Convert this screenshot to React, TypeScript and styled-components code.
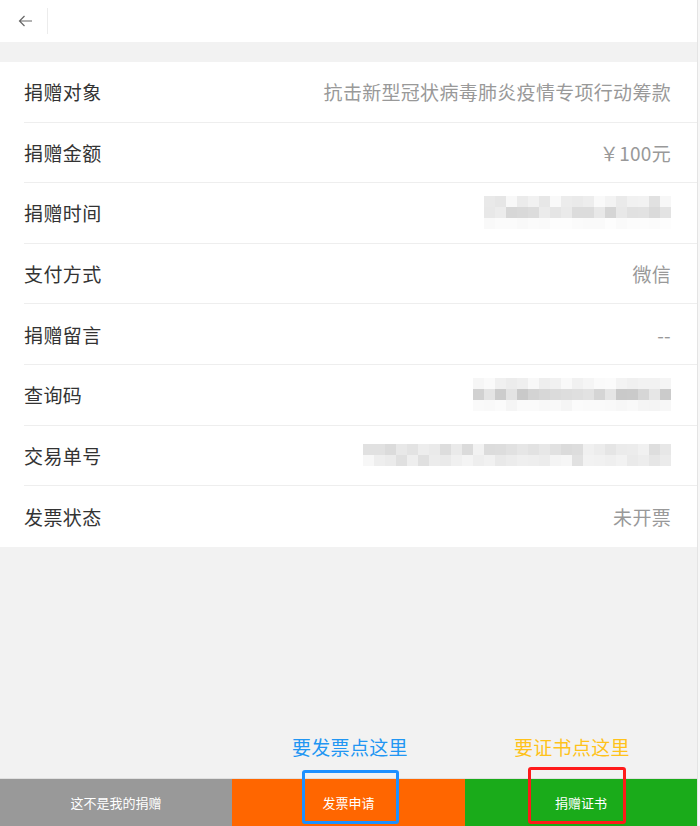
import React from "react";
import styled, { createGlobalStyle } from "styled-components";

const Global = createGlobalStyle`
  html, body { margin: 0; padding: 0; background: #f2f2f2; }
  body { font-family: "Noto Sans CJK SC", "Noto Sans", sans-serif; }
  * { box-sizing: border-box; }
`;

const Frame = styled.div`
  display: flex;
  width: 700px;
  height: 826px;
  overflow: hidden;
`;

const Page = styled.div`
  position: relative;
  width: 697px;
  height: 826px;
  display: flex;
  flex-direction: column;
  background: #f2f2f2;
`;

const Gutter = styled.div`
  width: 3px;
  background: #f7f7f7;
  border-left: 1px solid #e4e4e4;
`;

const Header = styled.div`
  height: 42px;
  background: #fff;
  display: flex;
  align-items: center;
  padding-left: 17px;
`;

const BackButton = styled.div`
  width: 17px;
  height: 17px;
  display: flex;
  align-items: center;
  justify-content: center;
  color: #666;
`;

const HeaderDivider = styled.div`
  width: 1px;
  height: 26px;
  background: #ececec;
  margin-left: 13px;
`;

const Spacer = styled.div`
  height: 20px;
`;

const List = styled.div`
  background: #fff;
  display: flex;
  flex-direction: column;
  padding-left: 24px;
`;

const Row = styled.div<{ $last?: boolean }>`
  height: 60.6px;
  display: flex;
  align-items: center;
  justify-content: space-between;
  padding-right: 26px;
  border-bottom: ${(p) => (p.$last ? "none" : "1px solid #eeeeee")};
`;

const Label = styled.span`
  font-size: 19px;
  color: #333;
  letter-spacing: 0.4px;
`;

const Value = styled.span`
  font-size: 19px;
  color: #999;
  letter-spacing: 0.3px;
`;

const MosaicBox = styled.div`
  display: flex;
  flex-direction: column;
`;

const MosaicRow = styled.div`
  display: flex;
`;

const Cell = styled.div`
  width: 11px;
  height: 11px;
`;

const Fill = styled.div`
  flex: 1;
`;

const BottomBar = styled.div`
  height: 48px;
  display: grid;
  grid-template-columns: 232px 233px 232px;
  border-top: 1px solid #e0e0e0;
`;

const BarButton = styled.div<{ $bg: string }>`
  background: ${(p) => p.$bg};
  color: #fff;
  font-size: 13px;
  display: flex;
  align-items: center;
  justify-content: center;
`;

const Note = styled.div<{ $color: string; $left: number }>`
  position: absolute;
  top: 733px;
  left: ${(p) => p.$left}px;
  font-size: 19px;
  color: ${(p) => p.$color};
  letter-spacing: 0.3px;
`;

const Marker = styled.div<{ $color: string; $left: number; $top: number; $w: number }>`
  position: absolute;
  left: ${(p) => p.$left}px;
  top: ${(p) => p.$top}px;
  width: ${(p) => p.$w}px;
  height: ${(p) => 824 - p.$top}px;
  border: 3px solid ${(p) => p.$color};
  border-radius: 3px;
`;

function rand(seed: number) {
  let s = seed;
  return () => {
    s = (s * 9301 + 49297) % 233280;
    return s / 233280;
  };
}

const Mosaic: React.FC<{ width: number; rows: [number, number, number][]; seed: number }> = ({
  width,
  rows,
  seed,
}) => {
  const r = rand(seed);
  const cols = Math.round(width / 11);
  return (
    <MosaicBox style={{ width }}>
      {rows.map(([base, spread, alpha], i) => (
        <MosaicRow key={i}>
          {Array.from({ length: cols }).map((_, j) => {
            const g = Math.round(base + r() * spread);
            return <Cell key={j} style={{ background: `rgba(${g},${g},${g},${alpha})` }} />;
          })}
        </MosaicRow>
      ))}
    </MosaicBox>
  );
};

type Item = { label: string; value?: string; mosaic?: React.ReactNode };

const items: Item[] = [
  { label: "捐赠对象", value: "抗击新型冠状病毒肺炎疫情专项行动筹款" },
  { label: "捐赠金额", value: "￥100元" },
  {
    label: "捐赠时间",
    mosaic: (
      <Mosaic
        width={187}
        seed={3}
        rows={[
          [225, 25, 1],
          [210, 30, 1],
          [245, 8, 0.6],
        ]}
      />
    ),
  },
  { label: "支付方式", value: "微信" },
  { label: "捐赠留言", value: "--" },
  {
    label: "查询码",
    mosaic: (
      <Mosaic
        width={198}
        seed={11}
        rows={[
          [232, 20, 0.9],
          [200, 35, 1],
          [238, 14, 0.8],
        ]}
      />
    ),
  },
  {
    label: "交易单号",
    mosaic: (
      <Mosaic
        width={308}
        seed={27}
        rows={[
          [218, 25, 1],
          [222, 25, 1],
        ]}
      />
    ),
  },
  { label: "发票状态", value: "未开票" },
];

export default function App() {
  return (
    <>
      <Global />
      <Frame>
        <Page>
          <Header>
            <BackButton>
              <svg width="15" height="12" viewBox="0 0 15 12" fill="none">
                <path d="M14 6H1.5M6.5 1L1.5 6l5 5" stroke="#666" strokeWidth="1.2" />
              </svg>
            </BackButton>
            <HeaderDivider />
          </Header>
          <Spacer />
          <List>
            {items.map((it, i) => (
              <Row key={it.label} $last={i === items.length - 1}>
                <Label>{it.label}</Label>
                {it.mosaic ? it.mosaic : <Value>{it.value}</Value>}
              </Row>
            ))}
          </List>
          <Fill />
          <BottomBar>
            <BarButton $bg="#999999">这不是我的捐赠</BarButton>
            <BarButton $bg="#ff6600">发票申请</BarButton>
            <BarButton $bg="#1aab1a">捐赠证书</BarButton>
          </BottomBar>
          <Note $color="#2196f3" $left={292}>要发票点这里</Note>
          <Note $color="#ffc21a" $left={514}>要证书点这里</Note>
          <Marker $color="#1e90ff" $left={302} $top={770} $w={97} />
          <Marker $color="#ff1a1a" $left={528} $top={767} $w={98} />
        </Page>
        <Gutter />
      </Frame>
    </>
  );
}
